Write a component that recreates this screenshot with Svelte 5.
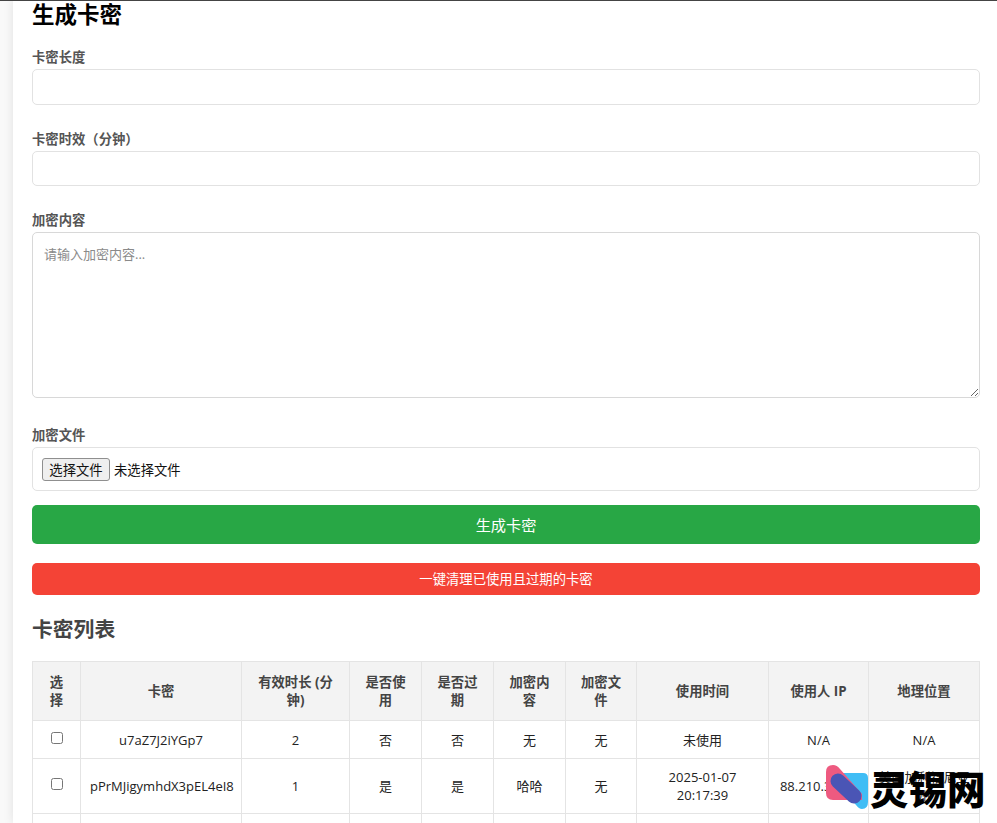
<script>
	const rows = [
		{ key: 'u7aZ7J2iYGp7', mins: 2, used: '否', expired: '否', content: '无', file: '无', time: ['未使用'], ip: 'N/A', geo: 'N/A' },
		{ key: 'pPrMJigymhdX3pEL4eI8', mins: 1, used: '是', expired: '是', content: '哈哈', file: '无', time: ['2025-01-07', '20:17:39'], ip: '88.210.3.120', geo: '美国加利福尼亚州' },
		{ key: 'kT9sLm2QwXc4', mins: 5, used: '是', expired: '是', content: '无', file: '无', time: ['2025-01-07', '20:30:12'], ip: 'N/A', geo: 'N/A' }
	];
</script>

<div class="page">
	<div class="topline"></div>
	<div class="container">
		<h1>生成卡密</h1>

		<div class="field first">
			<label for="len">卡密长度</label>
			<input id="len" type="text" class="text tall" />
		</div>
		<div class="field">
			<label for="dur">卡密时效（分钟）</label>
			<input id="dur" type="text" class="text" />
		</div>
		<div class="field last-text">
			<label for="txt">加密内容</label>
			<textarea id="txt" placeholder="请输入加密内容..."></textarea>
		</div>
		<div class="field filefield">
			<label for="file">加密文件</label>
			<div class="filebox">
				<button type="button" class="pick">选择文件</button>
				<span>未选择文件</span>
			</div>
		</div>

		<button type="button" class="btn green">生成卡密</button>
		<button type="button" class="btn red">一键清理已使用且过期的卡密</button>

		<h2>卡密列表</h2>

		<table>
			<colgroup>
				<col style="width:48px" />
				<col style="width:161px" />
				<col style="width:108px" />
				<col style="width:72px" />
				<col style="width:72px" />
				<col style="width:72px" />
				<col style="width:71px" />
				<col style="width:132px" />
				<col style="width:100px" />
				<col style="width:111px" />
			</colgroup>
			<thead>
				<tr>
					<th>选择</th>
					<th>卡密</th>
					<th>有效时长 (分钟)</th>
					<th>是否使用</th>
					<th>是否过期</th>
					<th>加密内容</th>
					<th>加密文件</th>
					<th>使用时间</th>
					<th>使用人 IP</th>
					<th>地理位置</th>
				</tr>
			</thead>
			<tbody>
				{#each rows as row}
					<tr>
						<td><input type="checkbox" class="check" /></td>
						<td>{row.key}</td>
						<td>{row.mins}</td>
						<td>{row.used}</td>
						<td>{row.expired}</td>
						<td>{row.content}</td>
						<td>{row.file}</td>
						<td>{#each row.time as t}<div>{t}</div>{/each}</td>
						<td>{row.ip}</td>
						<td>{row.geo}</td>
					</tr>
				{/each}
			</tbody>
		</table>
	</div>

	<div class="logo">
		<svg width="44" height="46" viewBox="0 0 44 46">
			<path d="M8 9 L37 9 Q42 9 42 14 L42 38 Q42 45 36 45 Q33 45 30 41 L8 16 Z" fill="#40bdf5" />
			<path d="M0 8 Q0 1 7 1 Q11 1 14 5 L36 30 L36 36 L7 36 Q0 36 0 29 Z" fill="#ee5a80" />
			<path d="M12 17 L28 32" stroke="#4a55b5" stroke-width="15" stroke-linecap="round" fill="none" />
		</svg>
		<span>灵锡网</span>
	</div>
</div>

<style>
	:global(body) {
		margin: 0;
		background: #f9f9f9;
		font-family: 'Open Sans', 'Noto Sans CJK SC', sans-serif;
	}

	.page {
		position: relative;
		height: 823px;
		overflow: hidden;
	}

	.topline {
		position: absolute;
		left: 0;
		right: 0;
		top: 0;
		height: 1px;
		background: #444;
		z-index: 2;
	}

	.container {
		box-sizing: border-box;
		width: 984px;
		margin-left: 13px;
		padding: 0 17px 0 19px;
		height: 823px;
		background: #fff;
		box-shadow: 0 0 10px rgba(0, 0, 0, 0.1);
	}

	h1 {
		margin: 0;
		padding-top: 1px;
		font-size: 22.5px;
		line-height: 28px;
		font-weight: 700;
		color: #000;
	}

	.field {
		display: flex;
		flex-direction: column;
		margin-bottom: 24px;
	}

	.field.first {
		margin-top: 18px;
	}

	.field.last-text {
		margin-bottom: 27px;
	}

	.field.filefield {
		margin-bottom: 14px;
	}

	label {
		font-size: 13.33px;
		line-height: 21px;
		font-weight: 700;
		color: #555;
		margin-bottom: 1px;
	}

	.text,
	textarea,
	.filebox {
		box-sizing: border-box;
		width: 100%;
		border: 1px solid #e2e2e2;
		border-radius: 5px;
		background: #fff;
		font-family: inherit;
		outline: none;
	}

	.text {
		height: 35px;
		display: block;
	}

	.text.tall {
		height: 36px;
	}

	textarea {
		display: block;
		height: 166px;
		padding: 12px 11px 11px;
		font-size: 13px;
		line-height: 19px;
		border-color: #d8d8d8;
	}

	textarea::placeholder {
		color: #8a8a8a;
	}

	.filebox {
		display: flex;
		align-items: center;
		height: 44px;
		padding: 0 9px;
		font-size: 13.33px;
		color: #111;
	}

	.pick {
		box-sizing: border-box;
		height: 23px;
		width: 68px;
		margin-right: 4px;
		padding: 0;
		background: #efefef;
		border: 1px solid #8f8f8f;
		border-radius: 3px;
		font-family: inherit;
		font-size: 13.33px;
		color: #111;
	}

	.btn {
		display: block;
		width: 100%;
		border: 0;
		border-radius: 5px;
		color: #fff;
		font-family: inherit;
		padding: 0 0 2px;
	}

	.green {
		height: 39px;
		background: #28a745;
		font-size: 15.2px;
		margin-bottom: 19px;
	}

	.red {
		height: 32px;
		background: #f44336;
		font-size: 13.33px;
	}

	h2 {
		margin: 20px 0 18px;
		font-size: 20.8px;
		line-height: 28px;
		font-weight: 700;
		color: #444;
	}

	table {
		width: 947px;
		table-layout: fixed;
		border-collapse: collapse;
		font-size: 13px;
		color: #222;
	}

	th,
	td {
		border: 1px solid #e4e4e4;
		padding: 9px;
		text-align: center;
		line-height: 18px;
	}

	th {
		height: 59px;
		box-sizing: border-box;
		padding: 10px 11px;
		background: #f3f3f3;
		font-size: 13.33px;
		font-weight: 700;
		color: #444;
	}

	tbody tr:nth-child(1) td {
		height: 38px;
		box-sizing: border-box;
	}

	.check {
		display: inline-block;
		width: 12px;
		height: 12px;
		margin: 0 0 2px;
		vertical-align: 1px;
	}

	.logo {
		position: absolute;
		left: 826px;
		top: 764px;
		display: flex;
		align-items: center;
		font-family: 'Noto Sans CJK SC', sans-serif;
		font-size: 38.5px;
		font-weight: 900;
		line-height: 46px;
		color: #000;
	}
</style>
